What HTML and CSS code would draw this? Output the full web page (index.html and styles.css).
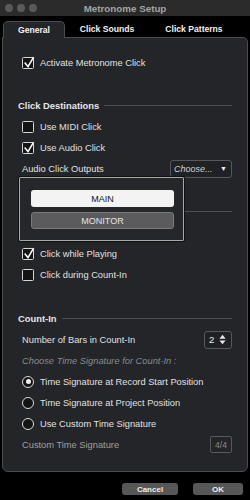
FILE: index.html
```html
<!DOCTYPE html>
<html>
<head>
<meta charset="utf-8">
<link rel="stylesheet" href="styles.css">
</head>
<body>
<div class="window">
  <div class="titlebar">
    <div class="lights"><span></span><span></span><span></span></div>
    <div class="title">Metronome Setup</div>
  </div>
  <div class="tabs">
    <div class="tab active">General</div>
    <div class="tab sounds">Click Sounds</div>
    <div class="tab patterns">Click Patterns</div>
  </div>
  <div class="panel">
    <div class="row">
      <span class="cb"><svg viewBox="0 0 12 12"><path d="M2.2 6.2 L5 9.6 L10.2 0.8"/></svg></span>
      <span>Activate Metronome Click</span>
    </div>

    <div class="heading gap1"><span>Click Destinations</span></div>
    <div class="row"><span class="cb"></span><span>Use MIDI Click</span></div>
    <div class="row">
      <span class="cb"><svg viewBox="0 0 12 12"><path d="M2.2 6.2 L5 9.6 L10.2 0.8"/></svg></span>
      <span>Use Audio Click</span>
    </div>
    <div class="row split">
      <span>Audio Click Outputs</span>
      <span class="dropdown"><em>Choose...</em><span class="tri">▼</span></span>
    </div>

    <div class="heading gap1"><span>Metronome Options</span></div>
    <div class="row">
      <span class="cb"><svg viewBox="0 0 12 12"><path d="M2.2 6.2 L5 9.6 L10.2 0.8"/></svg></span>
      <span>Click while Recording</span>
    </div>
    <div class="row">
      <span class="cb"><svg viewBox="0 0 12 12"><path d="M2.2 6.2 L5 9.6 L10.2 0.8"/></svg></span>
      <span>Click while Playing</span>
    </div>
    <div class="row"><span class="cb"></span><span>Click during Count-In</span></div>

    <div class="heading gap2"><span>Count-In</span></div>
    <div class="row split">
      <span>Number of Bars in Count-In</span>
      <span class="spinner"><span>2</span>
        <svg viewBox="0 0 8 12"><path d="M4 0.5 L7.5 5 L0.5 5 Z M4 11.5 L7.5 7 L0.5 7 Z"/></svg>
      </span>
    </div>
    <div class="row hint">Choose Time Signature for Count-In :</div>
    <div class="row"><span class="radio on"></span><span>Time Signature at Record Start Position</span></div>
    <div class="row"><span class="radio"></span><span>Time Signature at Project Position</span></div>
    <div class="row"><span class="radio"></span><span>Use Custom Time Signature</span></div>
    <div class="row split dim">
      <span>Custom Time Signature</span>
      <span class="sigbox">4/4</span>
    </div>

    <div class="popup">
      <div class="opt main">MAIN</div>
      <div class="opt monitor">MONITOR</div>
    </div>
  </div>
  <div class="footer">
    <div class="btn cancel">Cancel</div>
    <div class="btn ok">OK</div>
  </div>
</div>
</body>
</html>
```

FILE: styles.css
```css
* { box-sizing: border-box; }
html, body {
  margin: 0;
  padding: 0;
  background: #000;
}
body {
  width: 250px;
  height: 500px;
  overflow: hidden;
  font-family: "Liberation Sans", Arial, sans-serif;
  color: #e2e2e2;
}
.window {
  width: 250px;
  height: 500px;
  background: #000;
}
.titlebar {
  height: 16px;
  background: #2b2b2b;
  display: flex;
  align-items: center;
  position: relative;
}
.lights {
  display: flex;
  gap: 4px;
  padding-left: 5px;
}
.lights span {
  width: 8px;
  height: 8px;
  border-radius: 50%;
  background: #5a5a5a;
}
.title {
  position: absolute;
  left: 0;
  right: 0;
  text-align: center;
  font-weight: bold;
  font-size: 9.8px;
  color: #a3a3a3;
}
.tabs {
  display: flex;
  align-items: flex-end;
  padding: 0 0 0 3px;
  height: 21px;
}
.tab {
  height: 16px;
  font-size: 8.6px;
  font-weight: bold;
  color: #f2f2f2;
  display: flex;
  align-items: center;
  justify-content: center;
}
.tab.active {
  width: 62px;
  background: #232528;
  border: 1px solid #4c4c4e;
  border-bottom: none;
  border-radius: 5px 5px 0 0;
  position: relative;
  z-index: 1;
  height: 17px;
  margin-bottom: -1px;
}
.tab.sounds { width: 84px; }
.tab.patterns { width: 90px; }
.panel {
  position: relative;
  margin: 0 2px;
  height: 435px;
  background: #232528;
  border: 1px solid #4c4c4e;
  border-radius: 0 5px 6px 6px;
  padding: 14px 15px 0 15px;
}
.row {
  height: 21px;
  display: flex;
  align-items: center;
  gap: 6px;
  margin-left: 4px;
  font-size: 9.3px;
  color: #e0e0e0;
  white-space: nowrap;
}
.row.split { justify-content: space-between; }
.heading {
  height: 21px;
  display: flex;
  align-items: center;
  gap: 5px;
  font-size: 9.4px;
  font-weight: bold;
  color: #e6e6e6;
  white-space: nowrap;
}
.heading::after {
  content: "";
  flex: 1;
  height: 1px;
  background: #4e4e50;
}
.gap1 { margin-top: 22px; }
.gap2 { margin-top: 23px; }
.cb {
  width: 12px;
  height: 12px;
  flex: none;
  border: 1.5px solid #d6d6d6;
  border-radius: 1.5px;
  background: #141414;
  position: relative;
}
.cb svg {
  position: absolute;
  left: -0.5px;
  top: -1px;
  width: 12px;
  height: 12px;
  overflow: visible;
}
.cb svg path {
  fill: none;
  stroke: #fafafa;
  stroke-width: 1.6;
  stroke-linecap: square;
}
.radio {
  width: 12px;
  height: 12px;
  flex: none;
  border: 1.5px solid #dadada;
  border-radius: 50%;
  background: #141414;
  display: flex;
  align-items: center;
  justify-content: center;
}
.radio.on::after {
  content: "";
  width: 5px;
  height: 5px;
  border-radius: 50%;
  background: #f0f0f0;
}
.dropdown {
  width: 62px;
  height: 18px;
  border: 1px solid #58585a;
  border-radius: 3px;
  background: #1f2124;
  display: flex;
  align-items: center;
  justify-content: space-between;
  padding: 0 4px 0 3px;
  font-size: 9px;
  color: #d0d0d0;
}
.dropdown em { font-style: italic; }
.dropdown .tri { font-size: 7px; color: #f0f0f0; }
.spinner {
  width: 28px;
  height: 18px;
  border: 1px solid #58585a;
  border-radius: 3px;
  background: #1f2124;
  display: flex;
  align-items: center;
  justify-content: space-between;
  padding: 0 5px 0 4px;
  font-size: 9.5px;
  color: #f0f0f0;
}
.spinner svg { width: 7px; height: 11px; }
.spinner svg path { fill: #e8e8e8; }
.hint {
  font-style: italic;
  color: #8a8a8c;
}
.dim { color: #a0a0a0; }
.sigbox {
  width: 22px;
  height: 17px;
  border: 1px solid #58585a;
  border-radius: 2px;
  display: flex;
  align-items: center;
  justify-content: center;
  font-size: 8.5px;
  color: #8e8e8e;
}
.popup {
  position: absolute;
  left: 16px;
  top: 139px;
  width: 165px;
  height: 64px;
  background: #25272a;
  border: 1px solid #a8a8a8;
  box-shadow: 0 0 0 1px #111;
  border-radius: 1px;
  padding: 12px 9px 0 11px;
  display: flex;
  flex-direction: column;
  gap: 5px;
}
.opt {
  height: 17px;
  border-radius: 3px;
  display: flex;
  align-items: center;
  justify-content: center;
  font-size: 9px;
}
.opt.main {
  background: #f3f3f3;
  color: #141414;
}
.opt.monitor {
  background: #5b5b5d;
  border: 1px solid #7a7a7c;
  color: #e4e4e4;
}
.footer {
  display: flex;
  justify-content: flex-end;
  gap: 15px;
  padding: 11px 7px 0 0;
}
.btn {
  height: 12px;
  background: #575757;
  border-radius: 3px;
  display: flex;
  align-items: center;
  justify-content: center;
  font-size: 8px;
  font-weight: bold;
  color: #ececec;
}
.btn.cancel { width: 56px; }
.btn.ok { width: 50px; }
```
